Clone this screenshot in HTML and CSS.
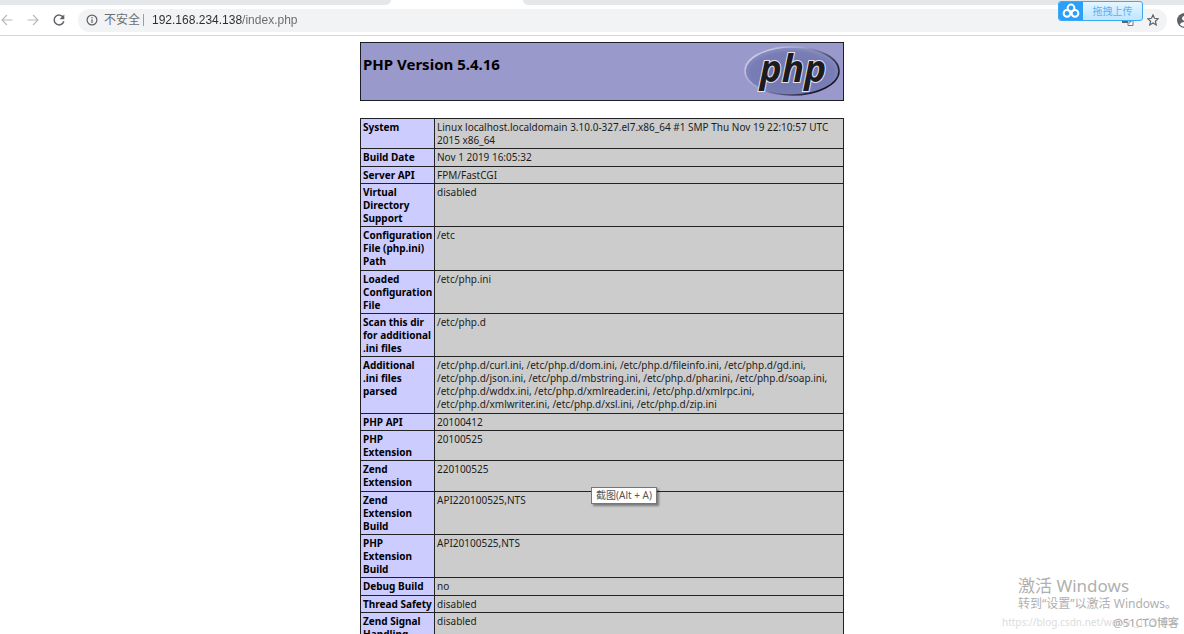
FILE: index.html
```html
<!DOCTYPE html>
<html lang="zh-CN">
<head>
<meta charset="utf-8">
<title>phpinfo()</title>
<link rel="stylesheet" href="styles.css">
</head>
<body>
<header class="browser">
  <div class="tabs"><div class="tab-left"></div><div class="tab-active"></div><div class="tab-right"></div></div>
  <div class="toolbar">
    <button class="nav off" aria-label="后退"><svg width="14" height="14" viewBox="0 0 14 14"><path d="M12.5 7H2M7 2L2 7l5 5"/></svg></button>
    <button class="nav off" aria-label="前进"><svg width="14" height="14" viewBox="0 0 14 14"><path d="M1.500 7H12M7 2l5 5-5 5"/></svg></button>
    <button class="nav" aria-label="刷新"><svg width="14" height="14" viewBox="0 0 14 14"><path d="M11.300 4.500A4.900 4.900 0 1 0 11.800 8.300"/><path class="solid" d="M12.300 1.500v4.800H7.500z"/></svg></button>
    <div class="omnibox">
      <svg class="info" width="12" height="12" viewBox="0 0 12 12"><circle cx="6" cy="6" r="4.900"/><path d="M6 5.300V9M6 3v1.300"/></svg>
      <label class="insecure" for="url">不安全</label>
      <span class="bar"></span>
      <input class="url" id="url" type="text" value="192.168.234.138/index.php">
      <button class="icon translate" aria-label="翻译"><svg width="13" height="13" viewBox="0 0 13 13"><path fill="#5f6368" d="M1 1h7v8H1z"/><path fill="#fff" stroke="#777" d="M7 4.500h5v7H7z"/><path stroke="#777" d="M8 7h3M9.500 6v1l-1 2.500"/></svg></button>
      <button class="icon" aria-label="收藏"><svg width="12" height="12" viewBox="0 0 12 12"><path class="star" d="M6 .900l1.500 3.400 3.700.4-2.800 2.500.8 3.700L6 9l-3.200 1.900.8-3.700L.800 4.700l3.700-.4z"/></svg></button>
    </div>
    <button class="profile" aria-label="用户"><svg width="15" height="15" viewBox="0 0 15 15"><circle cx="7.500" cy="7.500" r="7.500" fill="#5f6368"/><circle cx="7.500" cy="5.300" r="2.400" fill="#fff"/><path fill="#fff" d="M2.900 11.500c1-3.200 8.200-3.200 9.200 0-2 2.800-7.200 2.800-9.200 0z"/></svg></button>
  </div>
</header>

<button class="upload"><span class="upload-logo"><svg width="18" height="16" viewBox="0 0 18 16"><circle cx="9" cy="5" r="3.400"/><circle cx="5" cy="10.300" r="3.400"/><circle cx="13" cy="10.300" r="3.400"/></svg></span><span class="upload-text">拖拽上传</span></button>

<main class="page">
  <section class="banner">
    <h1>PHP Version 5.4.16</h1>
    <svg class="logo" width="98" height="52" viewBox="0 0 98 52" role="img" aria-label="php">
      <defs>
        <linearGradient id="rim" x1="0" y1="0" x2="1" y2=".6"><stop offset="0" stop-color="#dcdcf0"/><stop offset=".45" stop-color="#a4a6cc"/><stop offset=".75" stop-color="#4b4d70"/><stop offset="1" stop-color="#14141f"/></linearGradient>
        <radialGradient id="fill" cx=".5" cy=".55" r=".55"><stop offset="0" stop-color="#6f75ae"/><stop offset=".8" stop-color="#787db6"/><stop offset="1" stop-color="#8b8fc2"/></radialGradient>
      </defs>
      <ellipse cx="49" cy="26" rx="47" ry="24" fill="url(#fill)" stroke="url(#rim)" stroke-width="1.500"/>
      <text class="logo-text" x="50" y="37" text-anchor="middle">php</text>
    </svg>
  </section>
  <table class="info-table">
    <colgroup><col class="key"><col></colgroup>
    <tbody>
    <tr><th scope="row">System</th><td>Linux localhost.localdomain 3.10.0-327.el7.x86_64 #1 SMP Thu Nov 19 22:10:57 UTC<br>2015 x86_64</td></tr>
    <tr><th scope="row">Build Date</th><td>Nov 1 2019 16:05:32</td></tr>
    <tr><th scope="row">Server API</th><td>FPM/FastCGI</td></tr>
    <tr><th scope="row">Virtual<br>Directory<br>Support</th><td>disabled</td></tr>
    <tr><th scope="row">Configuration<br>File (php.ini)<br>Path</th><td>/etc</td></tr>
    <tr><th scope="row">Loaded<br>Configuration<br>File</th><td>/etc/php.ini</td></tr>
    <tr><th scope="row">Scan this dir<br>for additional<br>.ini files</th><td>/etc/php.d</td></tr>
    <tr><th scope="row">Additional<br>.ini files<br>parsed</th><td>/etc/php.d/curl.ini, /etc/php.d/dom.ini, /etc/php.d/fileinfo.ini, /etc/php.d/gd.ini,<br>/etc/php.d/json.ini, /etc/php.d/mbstring.ini, /etc/php.d/phar.ini, /etc/php.d/soap.ini,<br>/etc/php.d/wddx.ini, /etc/php.d/xmlreader.ini, /etc/php.d/xmlrpc.ini,<br>/etc/php.d/xmlwriter.ini, /etc/php.d/xsl.ini, /etc/php.d/zip.ini</td></tr>
    <tr><th scope="row">PHP API</th><td>20100412</td></tr>
    <tr><th scope="row">PHP<br>Extension</th><td>20100525</td></tr>
    <tr><th scope="row">Zend<br>Extension</th><td>220100525</td></tr>
    <tr><th scope="row">Zend<br>Extension<br>Build</th><td>API220100525,NTS</td></tr>
    <tr><th scope="row">PHP<br>Extension<br>Build</th><td>API20100525,NTS</td></tr>
    <tr><th scope="row">Debug Build</th><td>no</td></tr>
    <tr><th scope="row">Thread Safety</th><td>disabled</td></tr>
    <tr><th scope="row">Zend Signal<br>Handling</th><td>disabled</td></tr>
    </tbody>
  </table>
</main>

<div class="tooltip" role="tooltip">截图(Alt + A)</div>
<aside class="activate">
  <div class="activate-title">激活 Windows</div>
  <div class="activate-text">转到“设置”以激活 Windows。</div>
</aside>
<div class="mark mark-url">https://blog.csdn.net/weixin_1C31051</div>
<div class="mark mark-site">@51CTO博客</div>
</body>
</html>
```
FILE: styles.css
```css
* { box-sizing: border-box; }
html { height: 100%; overflow: hidden; }
body {
  margin: 0;
  height: 100%;
  overflow: hidden;
  position: relative;
  background: #fff;
  color: #1c1c1c;
  font-family: "Noto Sans", "Noto Sans CJK SC", sans-serif;
  font-size: 10px;
  line-height: 13px;
}
button { border: 0; padding: 0; background: none; display: flex; font: inherit; }
svg { display: block; flex: none; }

.browser { border-bottom: 1px solid #d6d8de; }
.tabs { display: flex; height: 5px; }
.tab-left { flex: 0 0 33%; background: #e4e8eb; border-bottom-right-radius: 5px; }
.tab-active { flex: 0 0 132px; }
.tab-right { flex: 1; background: #e4e8eb; border-bottom-left-radius: 5px; }
.toolbar { display: flex; align-items: center; height: 30px; overflow: hidden; }
.nav { flex: none; width: 26px; }
.nav svg { fill: none; stroke: #5f6368; stroke-width: 1.5; }
.nav .solid { fill: #5f6368; stroke: none; }
.off svg { stroke: #b8babd; stroke-width: 1.2; }
.omnibox {
  flex: 1;
  min-width: 0;
  display: flex;
  align-items: center;
  height: 23px;
  padding: 0 8px;
  border-radius: 12px;
  background: #f1f3f4;
}
.info { fill: none; stroke: #5f6368; stroke-width: 1.2; }
.insecure { margin-left: 6px; font-size: 12px; line-height: 16px; color: #6b6e72; white-space: nowrap; }
.bar { width: 1px; height: 12px; margin: 0 8px 0 3px; background: #9a9da1; }
.url {
  flex: 1;
  min-width: 0;
  border: 0;
  padding: 0;
  outline: 0;
  font-family: "Liberation Sans", Arial, sans-serif;
  font-size: 12px;
  line-height: 16px;
  color: transparent;
  background: linear-gradient(90deg, #2b2d30 90px, #66696d 90px) text;
}
.icon { margin-left: 13px; }
.star { fill: none; stroke: #5f6368; stroke-width: 1.2; }
.profile { flex: none; width: 17px; padding-left: 10px; }

.upload {
  position: absolute;
  top: 1px;
  right: 41px;
  width: 85px;
  height: 20px;
  border: 1px solid #3ba9f8;
  border-radius: 3px;
  overflow: hidden;
  background: linear-gradient(#e4f5ff, #bfe6ff);
}
.upload-logo { display: flex; align-items: center; justify-content: center; flex: 0 0 24px; height: 18px; background: #2aa0fb; }
.upload-logo svg { fill: none; stroke: #fff; stroke-width: 2; }
.upload-text { flex: 1; text-align: center; line-height: 18px; color: #55b4f5; }

.page { width: 484px; margin: 6px auto 0; position: relative; left: 10px; }
.banner {
  display: flex;
  justify-content: space-between;
  height: 59px;
  padding: 2px;
  border: 1px solid #1c1c28;
  background: #9999cc;
}
.banner h1 { margin: 9px 0 0; font-size: 15px; line-height: 20px; color: #000; }
.logo-text { font: italic bold 37px "Open Sans", sans-serif; fill: #1d1b20; stroke: #e3e3ef; stroke-width: 2; paint-order: stroke; }

.info-table { width: 100%; margin-top: 17px; border-collapse: collapse; table-layout: fixed; }
.key { width: 74px; }
.info-table th, .info-table td {
  border: 1px solid #222;
  padding: 2px 2px 1px;
  text-align: left;
  vertical-align: top;
  white-space: nowrap;
}
.info-table tr:nth-child(3n+2) > * { padding-bottom: 2px; }
.info-table th { background: #ccccff; color: #000; font-weight: 700; }
.info-table td { background: #cccccc; }

.tooltip {
  position: absolute;
  left: 591px;
  top: 487px;
  padding: 1px 4px;
  border: 1px solid #777;
  background: #fff;
  color: #555;
  box-shadow: 2px 2px 2px #0006;
  white-space: nowrap;
}
.activate { position: absolute; right: 7px; bottom: 23px; color: #b0b0b0; white-space: nowrap; }
.activate-title { font-size: 17px; line-height: 22px; }
.activate-text { font-size: 12px; line-height: 14px; }
.mark { position: absolute; bottom: 5px; white-space: nowrap; }
.mark-url { right: 5px; color: #dcdcdc; }
.mark-site { right: 5px; color: #aaa; font-size: 11px; }
```
